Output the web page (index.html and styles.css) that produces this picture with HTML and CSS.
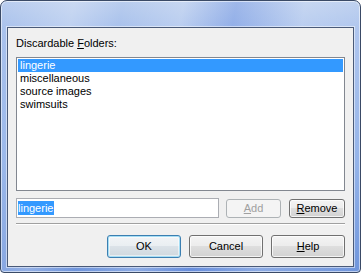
FILE: index.html
```html
<!DOCTYPE html>
<html>
<head>
<meta charset="utf-8">
<link rel="stylesheet" href="styles.css">
</head>
<body>
<div class="window">
  <div class="client">
    <div class="label">Discardable <u>F</u>olders:</div>
    <div class="listbox">
      <div class="item selected">lingerie</div>
      <div class="item">miscellaneous</div>
      <div class="item">source images</div>
      <div class="item">swimsuits</div>
    </div>
    <div class="editrow">
      <div class="textbox"><span class="sel">lingerie</span></div>
      <div class="btn disabled"><u>A</u>dd</div>
      <div class="btn"><u>R</u>emove</div>
    </div>
    <div class="sep"></div>
    <div class="buttons">
      <div class="btn big default">OK</div>
      <div class="btn big">Cancel</div>
      <div class="btn big"><u>H</u>elp</div>
    </div>
  </div>
</div>
</body>
</html>
```

FILE: styles.css
```css
html, body {
  margin: 0;
  padding: 0;
  background: #ffffff;
}
body {
  width: 361px;
  height: 274px;
  overflow: hidden;
  font-family: "Liberation Sans", Arial, sans-serif;
  font-size: 11px;
  color: #000;
}
.window {
  box-sizing: border-box;
  width: 361px;
  height: 273px;
  border: 1px solid #3a4a66;
  border-radius: 7px 7px 4px 4px;
  padding: 26px 6px 6px 6px;
  background:
    linear-gradient(100deg, rgba(255,255,255,0) 0%, rgba(255,255,255,0.25) 18%, rgba(255,255,255,0) 30%, rgba(255,255,255,0.2) 45%, rgba(80,120,220,0.25) 58%, rgba(255,255,255,0.2) 75%, rgba(255,255,255,0) 100%),
    linear-gradient(to bottom, #b9cdee 0%, #a7c0ec 30px, #8fb0e8 60%, #6f95dc 100%);
  box-shadow: inset 0 0 0 1px rgba(255,255,255,0.55);
}
.client {
  box-sizing: border-box;
  height: 240px;
  background: #f0f0f0;
  border: 1px solid #4a5a78;
  box-shadow: 0 0 0 1px rgba(255,255,255,0.5);
  padding: 9px 8px 8px 8px;
  display: flex;
  flex-direction: column;
}
.label {
  height: 13px;
  line-height: 13px;
  margin-bottom: 7px;
}
.listbox {
  box-sizing: border-box;
  height: 136px;
  background: #fff;
  border: 1px solid #828790;
  padding: 1px 1px;
}
.item {
  height: 13px;
  line-height: 13px;
  padding-left: 2px;
}
.item.selected {
  background: #3399ff;
  color: #fff;
}
.editrow {
  display: flex;
  align-items: center;
  margin-top: 7px;
}
.textbox {
  box-sizing: border-box;
  width: 203px;
  height: 20px;
  background: #fff;
  border: 1px solid #abadb3;
  padding: 2px 1px;
  line-height: 14px;
  margin-right: 7px;
}
.sel {
  background: #3399ff;
  color: #fff;
  display: inline-block;
  height: 14px;
  padding-right: 1px;
}
.btn {
  box-sizing: border-box;
  height: 19px;
  border: 1px solid #707070;
  border-radius: 3px;
  background: linear-gradient(to bottom, #f4f4f4 0%, #ececec 50%, #dedede 50%, #d2d2d2 100%);
  box-shadow: inset 0 0 0 1px rgba(255,255,255,0.75);
  text-align: center;
  line-height: 17px;
  width: 55px;
}
.editrow .btn.disabled {
  width: 55px;
  margin-right: 8px;
  border-color: #adb2b5;
  background: #f4f4f4;
  color: #a0a0a0;
  box-shadow: none;
}
.editrow .btn:last-child {
  width: 56px;
}
.sep {
  height: 1px;
  background: #a0a0a0;
  border-bottom: 1px solid #ffffff;
  margin-top: 5px;
}
.buttons {
  display: flex;
  justify-content: flex-end;
  gap: 8px;
  margin-top: 10px;
}
.btn.big {
  width: 74px;
  height: 23px;
  line-height: 21px;
}
.btn.default {
  border-color: #3c7fb1;
  box-shadow: inset 0 0 0 1px #a6def5, inset 0 0 0 2px rgba(255,255,255,0.5);
  background: linear-gradient(to bottom, #f2f4f6 0%, #e9eef2 50%, #dbe2e8 50%, #cfd8de 100%);
}
u {
  text-decoration: underline;
  text-underline-offset: 1px;
}
```
